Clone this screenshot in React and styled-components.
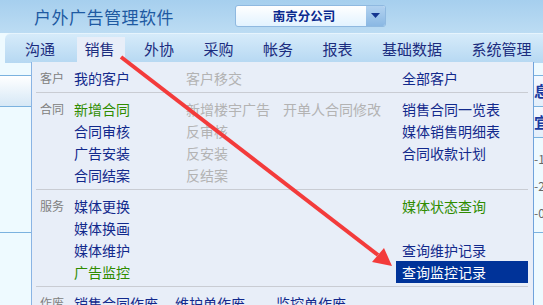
import React from 'react';
import styled, { createGlobalStyle } from 'styled-components';

const GlobalStyle = createGlobalStyle`
  html, body {
    margin: 0;
    padding: 0;
    width: 543px;
    height: 305px;
    overflow: hidden;
    background: #eefaff;
    font-family: "Noto Sans CJK SC", "Noto Sans", sans-serif;
  }
`;

const Page = styled.div`
  position: relative;
  width: 543px;
  height: 305px;
  overflow: hidden;
`;

const Header = styled.div`
  height: 33px;
  display: flex;
  align-items: center;
  padding-left: 34px;
  background: linear-gradient(#a6cfee, #bcdcf3);
`;

const Title = styled.h1`
  margin: 0 61px 0 0;
  font-size: 17px;
  font-weight: normal;
  letter-spacing: 0.5px;
  color: #1e5aa2;
  line-height: 20px;
`;

const Select = styled.div`
  width: 149px;
  height: 20px;
  display: flex;
  border: 1px solid #8fb9e0;
  border-radius: 3px;
  background: linear-gradient(#ffffff, #e2f3ff);
  overflow: hidden;
  margin-top: -2px;
`;

const SelectText = styled.span`
  flex: 1;
  text-align: center;
  font-size: 12.5px;
  font-weight: bold;
  color: #0b2a8e;
  line-height: 20px;
  padding-left: 6px;
`;

const SelectButton = styled.span`
  width: 19px;
  display: flex;
  align-items: center;
  justify-content: center;
  background: linear-gradient(#b2d2f0, #8ab8e3);
`;

const NavBar = styled.nav`
  height: 29px;
  margin-left: 5px;
  display: flex;
  align-items: flex-end;
  gap: 11.5px;
  border-radius: 6px 0 0 0;
  border-top: 1px solid #e6f4fd;
  background: linear-gradient(#d6ebfa, #b6d8f2);
  padding-left: 12px;
`;

const NavItem = styled.span`
  height: 26px;
  padding: 0 10px 0 8px;
  font-size: 15px;
  line-height: 24px;
  white-space: nowrap;
  color: #1b2c7e;
  background: ${(p) => (p.$active ? '#e8eef8' : 'transparent')};
`;

const Workspace = styled.div`
  height: 243px;
  background: #eefaff;
`;

const Strip = styled.div`
  margin-top: 12px;
  height: 30px;
  border-top: 1px solid #7bb2df;
  border-bottom: 1px solid #7bb2df;
  background: linear-gradient(#ffffff, #d6e8f6);
`;

const Cell = styled.div`
  width: 9px;
  height: ${(p) => p.$h}px;
  margin-left: auto;
  font-size: ${(p) => (p.$head ? 15 : 12)}px;
  font-weight: ${(p) => (p.$head ? 'bold' : 'normal')};
  line-height: ${(p) => p.$h}px;
  color: ${(p) => (p.$head ? '#1a3aa0' : '#666666')};
  overflow: hidden;
  white-space: nowrap;
  border-bottom: ${(p) => (p.$line ? '1px solid #7bb2df' : 'none')};
  background: ${(p) => (p.$head ? 'linear-gradient(#f4f9ff, #e2eefa)' : 'transparent')};
`;

const Rows = styled.div`
  padding-top: 7px;
  border-bottom: 1px solid #7bb2df;
  padding-bottom: 6px;
`;

const Menu = styled.div`
  position: absolute;
  left: 31px;
  top: 62px;
  width: 500px;
  height: 250px;
  background: #e8eef8;
  border-left: 1px solid #8ab4e4;
  border-right: 1px solid #6fa3dc;
  padding-right: 1px;
`;

const Group = styled.div`
  margin: 0 4px;
  padding: 5px 0 3px 4px;
  border-top: ${(p) => (p.$first ? 'none' : '1px solid #c9ccd3')};
  display: grid;
  grid-template-columns: ${(p) =>
    p.$wide ? '28px 101px 101px 101px' : '28px 112px 97px 119px 132px'};
  grid-auto-rows: 22px;
`;

const Label = styled.span`
  font-size: 12px;
  line-height: 22px;
  color: #808080;
  grid-row: 1;
  grid-column: 1;
`;

const colors = {
  link: '#12298c',
  green: '#2f8c00',
  off: '#b3b3b3',
};

const Item = styled.span`
  padding-left: 6px;
  font-size: 14px;
  line-height: 22px;
  white-space: nowrap;
  color: ${(p) => (p.$active ? '#ffffff' : colors[p.$kind || 'link'])};
  background: ${(p) => (p.$active ? '#003399' : 'transparent')};
  grid-column: ${(p) => p.$col + 1};
  grid-row: ${(p) => p.$row};
`;

const Arrow = styled.svg`
  position: absolute;
  left: 0;
  top: 0;
  pointer-events: none;
`;

const groups = [
  {
    label: '客户',
    items: [
      ['我的客户', 1, 1],
      ['客户移交', 2, 1, 'off'],
      ['全部客户', 4, 1],
    ],
  },
  {
    label: '合同',
    items: [
      ['新增合同', 1, 1, 'green'],
      ['合同审核', 1, 2],
      ['广告安装', 1, 3],
      ['合同结案', 1, 4],
      ['新增楼宇广告', 2, 1, 'off'],
      ['反审核', 2, 2, 'off'],
      ['反安装', 2, 3, 'off'],
      ['反结案', 2, 4, 'off'],
      ['开单人合同修改', 3, 1, 'off'],
      ['销售合同一览表', 4, 1],
      ['媒体销售明细表', 4, 2],
      ['合同收款计划', 4, 3],
    ],
  },
  {
    label: '服务',
    items: [
      ['媒体更换', 1, 1],
      ['媒体换画', 1, 2],
      ['媒体维护', 1, 3],
      ['广告监控', 1, 4, 'green'],
      ['媒体状态查询', 4, 1, 'green'],
      ['查询维护记录', 4, 3],
      ['查询监控记录', 4, 4, 'link', true],
    ],
  },
  {
    label: '作废',
    wide: true,
    items: [
      ['销售合同作废', 1, 1],
      ['维护单作废', 2, 1],
      ['监控单作废', 3, 1],
    ],
  },
];

const navItems = ['沟通', '销售', '外协', '采购', '帐务', '报表', '基础数据', '系统管理'];

export default function App() {
  return (
    <Page>
      <GlobalStyle />
      <Header>
        <Title>户外广告管理软件</Title>
        <Select>
          <SelectText>南京分公司</SelectText>
          <SelectButton>
            <svg width="9" height="6" viewBox="0 0 9 6">
              <path d="M0 0 L9 0 L4.5 5 Z" fill="#14358f" />
            </svg>
          </SelectButton>
        </Select>
      </Header>
      <NavBar>
        {navItems.map((name) => (
          <NavItem key={name} $active={name === '销售'}>
            {name}
          </NavItem>
        ))}
      </NavBar>
      <Workspace>
        <Strip>
          <Cell $h={30} $head>息</Cell>
        </Strip>
        <Cell $h={30} $head $line>宜</Cell>
        <Rows>
          <Cell $h={27}>-1</Cell>
          <Cell $h={27}>-2</Cell>
          <Cell $h={27}>-0</Cell>
        </Rows>
      </Workspace>
      <Menu>
        {groups.map((g, gi) => (
          <Group key={g.label} $first={gi === 0} $wide={g.wide}>
            <Label>{g.label}</Label>
            {g.items.map(([text, col, row, kind, active]) => (
              <Item key={text} $col={col} $row={row} $kind={kind} $active={active}>
                {text}
              </Item>
            ))}
          </Group>
        ))}
      </Menu>
      <Arrow width="543" height="305" viewBox="0 0 543 305">
        <line x1="121" y1="57" x2="378" y2="255" stroke="#f33b3b" strokeWidth="4" />
        <path d="M392 266 L372 262 L384 248 Z" fill="#f33b3b" />
      </Arrow>
    </Page>
  );
}
